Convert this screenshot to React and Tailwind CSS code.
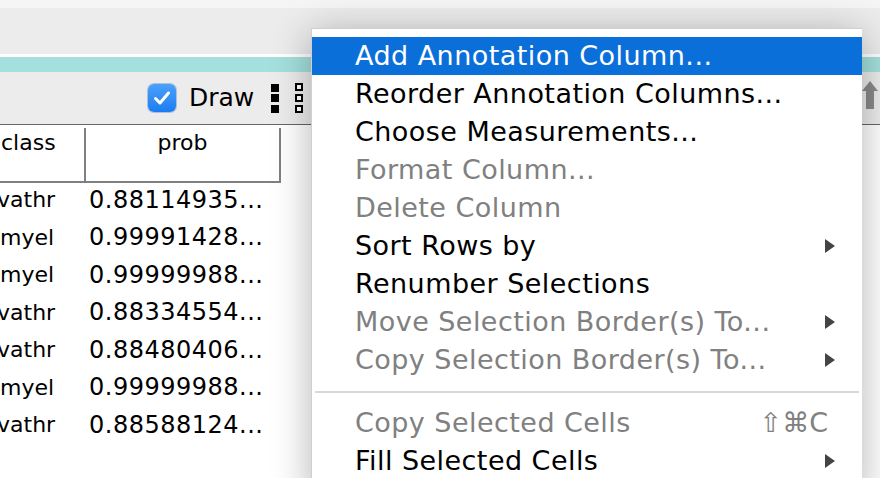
const rows = [
  ['vathr', '0.88114935...'],
  ['myel', '0.99991428...'],
  ['myel', '0.99999988...'],
  ['vathr', '0.88334554...'],
  ['vathr', '0.88480406...'],
  ['myel', '0.99999988...'],
  ['vathr', '0.88588124...'],
]

const items = [
  { label: 'Add Annotation Column...', active: true },
  { label: 'Reorder Annotation Columns...' },
  { label: 'Choose Measurements...' },
  { label: 'Format Column...', disabled: true },
  { label: 'Delete Column', disabled: true },
  { label: 'Sort Rows by', sub: true },
  { label: 'Renumber Selections' },
  { label: 'Move Selection Border(s) To...', disabled: true, sub: true },
  { label: 'Copy Selection Border(s) To...', disabled: true, sub: true },
  { sep: true },
  { label: 'Copy Selected Cells', disabled: true, shortcut: '⇧⌘C' },
  { label: 'Fill Selected Cells', sub: true },
]

function Arrow() {
  return (
    <svg width="10" height="14" viewBox="0 0 10 14" className="shrink-0">
      <path d="M0 0 L10 7 L0 14 Z" fill="#444" />
    </svg>
  )
}

function MenuItem({ item }) {
  if (item.sep) {
    return (
      <div className="h-[25px] flex items-center px-[3px]">
        <div className="h-[2px] w-full bg-[#d8d8d8]" />
      </div>
    )
  }
  const color = item.active ? 'text-white' : item.disabled ? 'text-[#808080]' : 'text-black'
  return (
    <div
      className={`h-[38px] flex items-center pl-[43px] pr-[27px] text-[27px] tracking-[0.45px] ${color} ${
        item.active ? 'bg-[#0b6fd9]' : ''
      }`}
    >
      <span className="flex-1 whitespace-nowrap">{item.label}</span>
      {item.shortcut && <span className="pr-[7px] tracking-normal text-[#808080]">{item.shortcut}</span>}
      {item.sub && <Arrow />}
    </div>
  )
}

export default function App() {
  return (
    <div className="relative w-[880px] h-[478px] overflow-hidden bg-white font-['DejaVu_Sans',sans-serif]">
      <div className="h-[8px] bg-[#f5f5f5]" />
      <div className="h-[46px] bg-[#ececec]" />
      <div className="h-[3px] bg-white" />
      <div className="h-[15px] bg-[#a4e0dd]" />

      {/* toolbar */}
      <div className="h-[52px] bg-[#ececec] flex items-center pl-[148px]">
        <div className="w-[28px] h-[28px] rounded-[6px] bg-gradient-to-b from-[#4aa1fb] to-[#1b7cf2] flex items-center justify-center shadow-[0_0_0_1px_rgba(0,60,160,0.25)]">
          <svg width="18" height="16" viewBox="0 0 18 16">
            <path d="M2.5 8.5 L7 13 L15.5 3" fill="none" stroke="white" strokeWidth="3" strokeLinecap="round" strokeLinejoin="round" />
          </svg>
        </div>
        <span className="ml-[13px] text-[25px] text-black">Draw</span>
        <div className="ml-[17px] flex flex-col gap-[2.5px]">
          <div className="w-[8px] h-[8px] bg-black" />
          <div className="w-[8px] h-[8px] bg-black" />
          <div className="w-[8px] h-[8px] bg-black" />
        </div>
        <div className="ml-[16px] flex flex-col gap-[3px]">
          <div className="w-[8px] h-[8px] border-2 border-black bg-white" />
          <div className="w-[8px] h-[8px] border-2 border-black bg-white" />
          <div className="w-[8px] h-[8px] border-2 border-black bg-white" />
        </div>
        <div className="ml-auto mr-[2px] mt-[-6px] flex flex-col items-center">
          <div className="w-0 h-0 border-l-[8px] border-r-[8px] border-b-[10px] border-l-transparent border-r-transparent border-b-[#8a8a8a]" />
          <div className="w-[8px] h-[18px] bg-[#8a8a8a]" />
        </div>
      </div>
      <div className="h-px bg-[#666]" />

      {/* table */}
      <div className="w-[281px]">
        <div className="flex h-[58px] pt-[3px] border-b-2 border-[#808080]">
          <div className="w-[86px] border-r-2 border-[#808080] text-[22px] leading-[30px] pl-[1px] text-black">class</div>
          <div className="w-[195px] border-r-2 border-[#808080] text-[22px] leading-[30px] text-center text-black">prob</div>
        </div>
        <div className="mt-[-2px]">
          {rows.map(([c, p], i) => (
            <div key={i} className="flex h-[37.5px] items-center text-black">
              <div className="w-[86px] overflow-hidden whitespace-nowrap text-[22px]">
                <span className={c === 'vathr' ? 'ml-[-3px]' : ''}>{c}</span>
              </div>
              <div className="pl-[3px] whitespace-nowrap text-[24px] tracking-[0.5px]">{p}</div>
            </div>
          ))}
        </div>
      </div>

      {/* popup menu */}
      <div className="absolute left-[311px] top-[28px] w-[551px] h-[470px] bg-white border-l border-t border-[#cfcfcf] pt-[8px] shadow-[0_6px_36px_rgba(0,0,0,0.3)]">
        {items.map((item, i) => (
          <MenuItem key={i} item={item} />
        ))}
      </div>
    </div>
  )
}
